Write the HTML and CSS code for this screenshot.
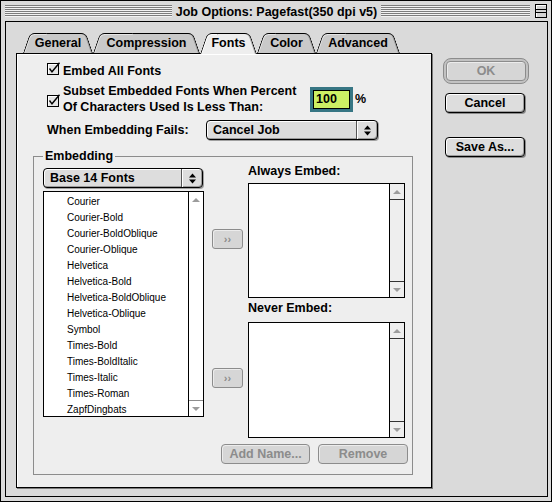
FILE: index.html
```html
<!DOCTYPE html>
<html>
<head>
<meta charset="utf-8">
<title>Job Options</title>
<link rel="stylesheet" href="styles.css">
</head>
<body>
<div class="window">
  <div class="titlebar">
    <div class="stripes"></div>
    <div class="title">Job Options: Pagefast(350 dpi v5)</div>
    <div class="title-right">
      <div class="stripes"></div>
      <div class="collapse">
        <svg width="12" height="14" viewBox="0 0 12 14">
          <rect x="0.5" y="0.5" width="11" height="13" fill="#d4d4d4" stroke="#000"/>
          <path d="M1 1.5H11M1.5 1V6" stroke="#fff"/>
          <path d="M1 5.5H11M1 8.5H11" stroke="#000"/>
          <path d="M1.5 9V13" stroke="#fff"/>
        </svg>
      </div>
    </div>
  </div>

  <div class="content">
    <div class="tabset">
      <div class="tabs">
        <div class="tab t-general">General</div>
        <div class="tab t-compression">Compression</div>
        <div class="tab t-fonts active">Fonts</div>
        <div class="tab t-color">Color</div>
        <div class="tab t-advanced">Advanced</div>
      </div>

      <div class="panel">
        <div class="row row1">
          <span class="check">
            <svg width="14" height="14" viewBox="0 0 14 14">
              <rect x="0.5" y="1.5" width="11" height="11" fill="#e4e4e4" stroke="#000"/>
              <path d="M1.5 2.5H10.5M1.5 2.5V11.5" stroke="#fff"/>
              <path d="M2.5 6.5L5 9.8L12.5 0.8" fill="none" stroke="#000" stroke-width="1.4"/>
            </svg>
          </span>
          <span class="label">Embed All Fonts</span>
        </div>

        <div class="row row2">
          <span class="check check2">
            <svg width="14" height="14" viewBox="0 0 14 14">
              <rect x="0.5" y="1.5" width="11" height="11" fill="#e4e4e4" stroke="#000"/>
              <path d="M1.5 2.5H10.5M1.5 2.5V11.5" stroke="#fff"/>
              <path d="M2.5 6.5L5 9.8L12.5 0.8" fill="none" stroke="#000" stroke-width="1.4"/>
            </svg>
          </span>
          <span class="label two">Subset Embedded Fonts When Percent<br>Of Characters Used Is Less Than:</span>
          <div class="field">100</div>
          <span class="pct">%</span>
        </div>

        <div class="row row3">
          <span class="label fail">When Embedding Fails:</span>
          <div class="popup popup-wide">
            <span class="ptext">Cancel Job</span>
            <span class="parrow">
              <svg width="7" height="11" viewBox="0 0 7 11"><path d="M0 4.5L3.5 0.5L7 4.5ZM0 6.5L3.5 10.5L7 6.5Z" fill="#000"/></svg>
            </span>
          </div>
        </div>

        <fieldset class="group">
          <legend>Embedding</legend>
          <div class="group-body">
            <div class="cols">
              <div class="col-left">
                <div class="popup popup-narrow">
                  <span class="ptext">Base 14 Fonts</span>
                  <span class="parrow">
                    <svg width="7" height="11" viewBox="0 0 7 11"><path d="M0 4.5L3.5 0.5L7 4.5ZM0 6.5L3.5 10.5L7 6.5Z" fill="#000"/></svg>
                  </span>
                </div>
                <div class="list list-fonts">
                  <div class="items">
                    <div class="item">Courier</div>
                    <div class="item">Courier-Bold</div>
                    <div class="item">Courier-BoldOblique</div>
                    <div class="item">Courier-Oblique</div>
                    <div class="item">Helvetica</div>
                    <div class="item">Helvetica-Bold</div>
                    <div class="item">Helvetica-BoldOblique</div>
                    <div class="item">Helvetica-Oblique</div>
                    <div class="item">Symbol</div>
                    <div class="item">Times-Bold</div>
                    <div class="item">Times-BoldItalic</div>
                    <div class="item">Times-Italic</div>
                    <div class="item">Times-Roman</div>
                    <div class="item">ZapfDingbats</div>
                  </div>
                  <div class="sb plain">
                    <div class="sb-btn up"><span class="tri-up"></span></div>
                    <div class="sb-track"></div>
                    <div class="sb-btn down"><span class="tri-down"></span></div>
                  </div>
                </div>
              </div>

              <div class="col-mid">
                <div class="arrowbtn">&rsaquo;&rsaquo;</div>
                <div class="arrowbtn">&rsaquo;&rsaquo;</div>
              </div>

              <div class="col-right">
                <div class="lbl">Always Embed:</div>
                <div class="list list-embed list-always">
                  <div class="items"></div>
                  <div class="sb">
                    <div class="sb-btn up"><span class="tri-up"></span></div>
                    <div class="sb-track"></div>
                    <div class="sb-btn down"><span class="tri-down"></span></div>
                  </div>
                </div>
                <div class="lbl lbl-never">Never Embed:</div>
                <div class="list list-embed list-never">
                  <div class="items"></div>
                  <div class="sb">
                    <div class="sb-btn up"><span class="tri-up"></span></div>
                    <div class="sb-track"></div>
                    <div class="sb-btn down"><span class="tri-down"></span></div>
                  </div>
                </div>
              </div>
            </div>

            <div class="actions">
              <div class="btn dis add">Add Name...</div>
              <div class="btn dis remove">Remove</div>
            </div>
          </div>
        </fieldset>
      </div>
    </div>

    <div class="side">
      <div class="okring"><div class="btn dis ok">OK</div></div>
      <div class="btn cancel">Cancel</div>
      <div class="btn saveas">Save As...</div>
    </div>
  </div>
</div>
</body>
</html>
```

FILE: styles.css
```css
* { box-sizing: border-box; }

html, body {
  margin: 0;
  padding: 0;
  background: #ffffff;
}

body {
  font-family: "Liberation Sans", Arial, sans-serif;
  font-size: 12.5px;
  color: #000;
}

.window {
  width: 552px;
  height: 502px;
  border: 1px solid #000;
  background: #dadada;
  padding: 0 3px 4px 4px;
  display: flex;
  flex-direction: column;
}

/* ---------- title bar ---------- */
.titlebar {
  height: 20px;
  flex: none;
  display: flex;
  align-items: center;
}

.stripes {
  flex: 1;
  height: 12px;
  margin-top: -1px;
  background: repeating-linear-gradient(to bottom, #7c7c7c 0 1px, #f2f2f2 1px 2px);
}

.title {
  font-weight: bold;
  line-height: 16px;
  padding: 1px 4px 0;
  white-space: nowrap;
}

.title-right {
  flex: 1;
  display: flex;
  align-items: center;
}

.collapse {
  width: 12px;
  height: 14px;
  margin-left: 5px;
  margin-right: 1px;
  margin-top: -1px;
  display: flex;
}

/* ---------- content ---------- */
.content {
  flex: 1;
  border: 1px solid #000;
  display: flex;
  align-items: flex-start;
  padding: 11px 0 0 10px;
}

.tabset {
  width: 416px;
  flex: none;
  display: flex;
  flex-direction: column;
}

.tabs {
  display: flex;
  height: 20px;
  padding-left: 7px;
  position: relative;
  z-index: 1;
  align-items: flex-start;
}

.tab {
  position: relative;
  isolation: isolate;
  height: 20px;
  display: flex;
  justify-content: center;
  padding-top: 2px;
  line-height: 16px;
  font-weight: bold;
  white-space: nowrap;
}

.tab::before,
.tab::after {
  content: "";
  position: absolute;
  top: 0;
  bottom: 0;
  width: 56%;
  background: #c9c9c9;
  border-top: 1px solid #000;
  z-index: -1;
}

.tab::before {
  left: 0;
  border-left: 1px solid #000;
  border-top-left-radius: 5px;
  transform-origin: bottom left;
  transform: skewX(-19deg);
  box-shadow: inset 1px 1px 0 #e6e6e6;
}

.tab::after {
  right: 0;
  border-right: 1px solid #000;
  border-top-right-radius: 5px;
  transform-origin: bottom right;
  transform: skewX(19deg);
  box-shadow: inset -1px 0 0 #9a9a9a;
}

.tab.active {
  height: 21px;
  z-index: 2;
}

.tab.active::before,
.tab.active::after {
  background: #eeeeee;
}

.tab.active::before { box-shadow: inset 1px 1px 0 #ffffff; }
.tab.active::after { box-shadow: inset -1px 0 0 #a8a8a8; }

.t-general { width: 70px; }
.t-compression { width: 107px; }
.t-fonts { width: 57px; }
.t-color { width: 59px; }
.t-advanced { width: 84px; }

.panel {
  height: 435px;
  border: 1px solid #000;
  background: #eeeeee;
  box-shadow: 1px 1px 0 #7a7a7a, inset 1px 1px 0 #ffffff;
  padding: 0 0 0 16px;
  display: flex;
  flex-direction: column;
  align-items: flex-start;
}

/* ---------- option rows ---------- */
.row {
  display: flex;
  margin-left: 14px;
  align-items: flex-start;
}

.label {
  font-weight: bold;
  line-height: 16px;
  white-space: nowrap;
}

.check {
  width: 14px;
  height: 14px;
  display: flex;
  margin-top: -1px;
}

.row1 {
  height: 16px;
  margin-top: 9px;
}

.row1 .label { margin-left: 2px; }

.row2 {
  margin-top: 4px;
  height: 32px;
}

.check2 { margin-top: 11px; }

.label.two {
  width: 243px;
  margin-left: 2px;
}

.field {
  width: 43px;
  height: 25px;
  margin-left: 4px;
  margin-top: 4px;
  border: 3px solid #377684;
  box-shadow: inset 0 0 0 1px #000;
  background: #cdf064;
  padding-left: 3px;
  font-weight: bold;
  line-height: 19px;
}

.pct {
  font-weight: bold;
  line-height: 16px;
  margin-left: 2px;
  margin-top: 8px;
}

.row3 {
  margin-top: 5px;
  height: 20px;
  align-items: center;
}

.label.fail { width: 159px; }

/* ---------- popups ---------- */
.popup {
  height: 20px;
  border: 1px solid #000;
  border-radius: 4px;
  background: #dddddd;
  box-shadow: inset 1px 1px 0 #ffffff, inset -1px -1px 0 #9c9c9c, 1px 1px 0 #a0a0a0;
  display: flex;
  align-items: center;
  font-weight: bold;
}

.popup-wide { width: 172px; }
.popup-narrow { width: 160px; }

.ptext {
  flex: 1;
  padding-left: 6px;
  line-height: 16px;
  white-space: nowrap;
}

.parrow {
  width: 21px;
  height: 100%;
  border-left: 1px solid #555;
  box-shadow: inset 1px 0 0 #ffffff;
  display: flex;
  align-items: center;
  justify-content: center;
}

/* ---------- group box ---------- */
.group {
  width: 380px;
  margin: 9px 0 0 0;
  padding: 0;
  border: 1px solid #8c8c8c;
  min-width: 0;
}

.group legend {
  margin-left: 9px;
  padding: 0 2px;
  font-weight: bold;
  line-height: 14px;
}

.group-body {
  padding: 0 7px 10px 9px;
}

.cols {
  display: flex;
  align-items: flex-start;
}

.col-left {
  width: 161px;
  padding-top: 5px;
}

.list {
  border: 1px solid #000;
  background: #ffffff;
  display: flex;
}

.list-fonts {
  width: 161px;
  height: 226px;
  margin-top: 3px;
}

.items {
  flex: 1;
  overflow: hidden;
  padding: 2px 0 0 23px;
  font-size: 10px;
}

.item {
  height: 16px;
  line-height: 16px;
  white-space: nowrap;
}

.sb {
  width: 15px;
  flex: none;
  border-left: 1px solid #000;
  display: flex;
  flex-direction: column;
  background: #eeeeee;
}

.sb-btn {
  height: 16px;
  flex: none;
  display: flex;
  align-items: center;
  justify-content: center;
}

.sb-btn.up { border-bottom: 1px solid #333; }
.sb-btn.down { border-top: 1px solid #333; }

.sb-track { flex: 1; }

.sb.plain { background: #ffffff; }
.sb.plain .sb-btn.up { border-bottom-color: transparent; }
.sb.plain .sb-btn.down { border-top-color: #8c8c8c; }

.tri-up {
  width: 0;
  height: 0;
  border-left: 4px solid transparent;
  border-right: 4px solid transparent;
  border-bottom: 4px solid #9c9c9c;
}

.tri-down {
  width: 0;
  height: 0;
  border-left: 4px solid transparent;
  border-right: 4px solid transparent;
  border-top: 4px solid #9c9c9c;
}

.col-mid {
  width: 31px;
  margin-left: 8px;
  padding-top: 66px;
  display: flex;
  flex-direction: column;
}

.arrowbtn {
  width: 31px;
  height: 20px;
  border: 1px solid #8c8c8c;
  border-radius: 3px;
  background: #d6d6d6;
  box-shadow: inset 1px 1px 0 #ececec;
  color: #8c8c8c;
  font-size: 11px;
  font-weight: bold;
  display: flex;
  align-items: center;
  justify-content: center;
  letter-spacing: 0;
}

.arrowbtn + .arrowbtn { margin-top: 119px; }

.col-right {
  width: 157px;
  margin-left: 5px;
}

.lbl {
  font-weight: bold;
  line-height: 16px;
  white-space: nowrap;
}

.list-embed {
  width: 157px;
  height: 115px;
}

.list-always { margin-top: 4px; }
.lbl-never { margin-top: 2px; }
.list-never { margin-top: 6px; height: 116px; }

.actions {
  display: flex;
  justify-content: flex-end;
  gap: 8px;
  margin-top: 6px;
  margin-right: -3px;
}

/* ---------- buttons ---------- */
.btn {
  width: 80px;
  height: 20px;
  border: 1px solid #000;
  border-radius: 4px;
  background: #dddddd;
  box-shadow: inset 1px 1px 0 #ffffff, inset -1px -1px 0 #9c9c9c, 1px 1px 0 #8a8a8a;
  font-weight: bold;
  line-height: 16px;
  display: flex;
  align-items: center;
  justify-content: center;
  white-space: nowrap;
}

.btn.dis {
  border-color: #8c8c8c;
  color: #8c8c8c;
  background: #d6d6d6;
  box-shadow: inset 1px 1px 0 #ececec;
}

.btn.add { width: 89px; }
.btn.remove { width: 90px; }

.side {
  margin-left: 11px;
  margin-top: 25px;
  display: flex;
  flex-direction: column;
  align-items: flex-start;
}

.okring {
  width: 86px;
  height: 26px;
  border: 1px solid #8c8c8c;
  border-radius: 8px;
  padding: 2px;
  background: #c2c2c2;
}

.okring .btn {
  width: 100%;
  height: 100%;
}

.cancel {
  margin-left: 2px;
  margin-top: 9px;
}

.saveas {
  margin-left: 2px;
  margin-top: 24px;
}
```
